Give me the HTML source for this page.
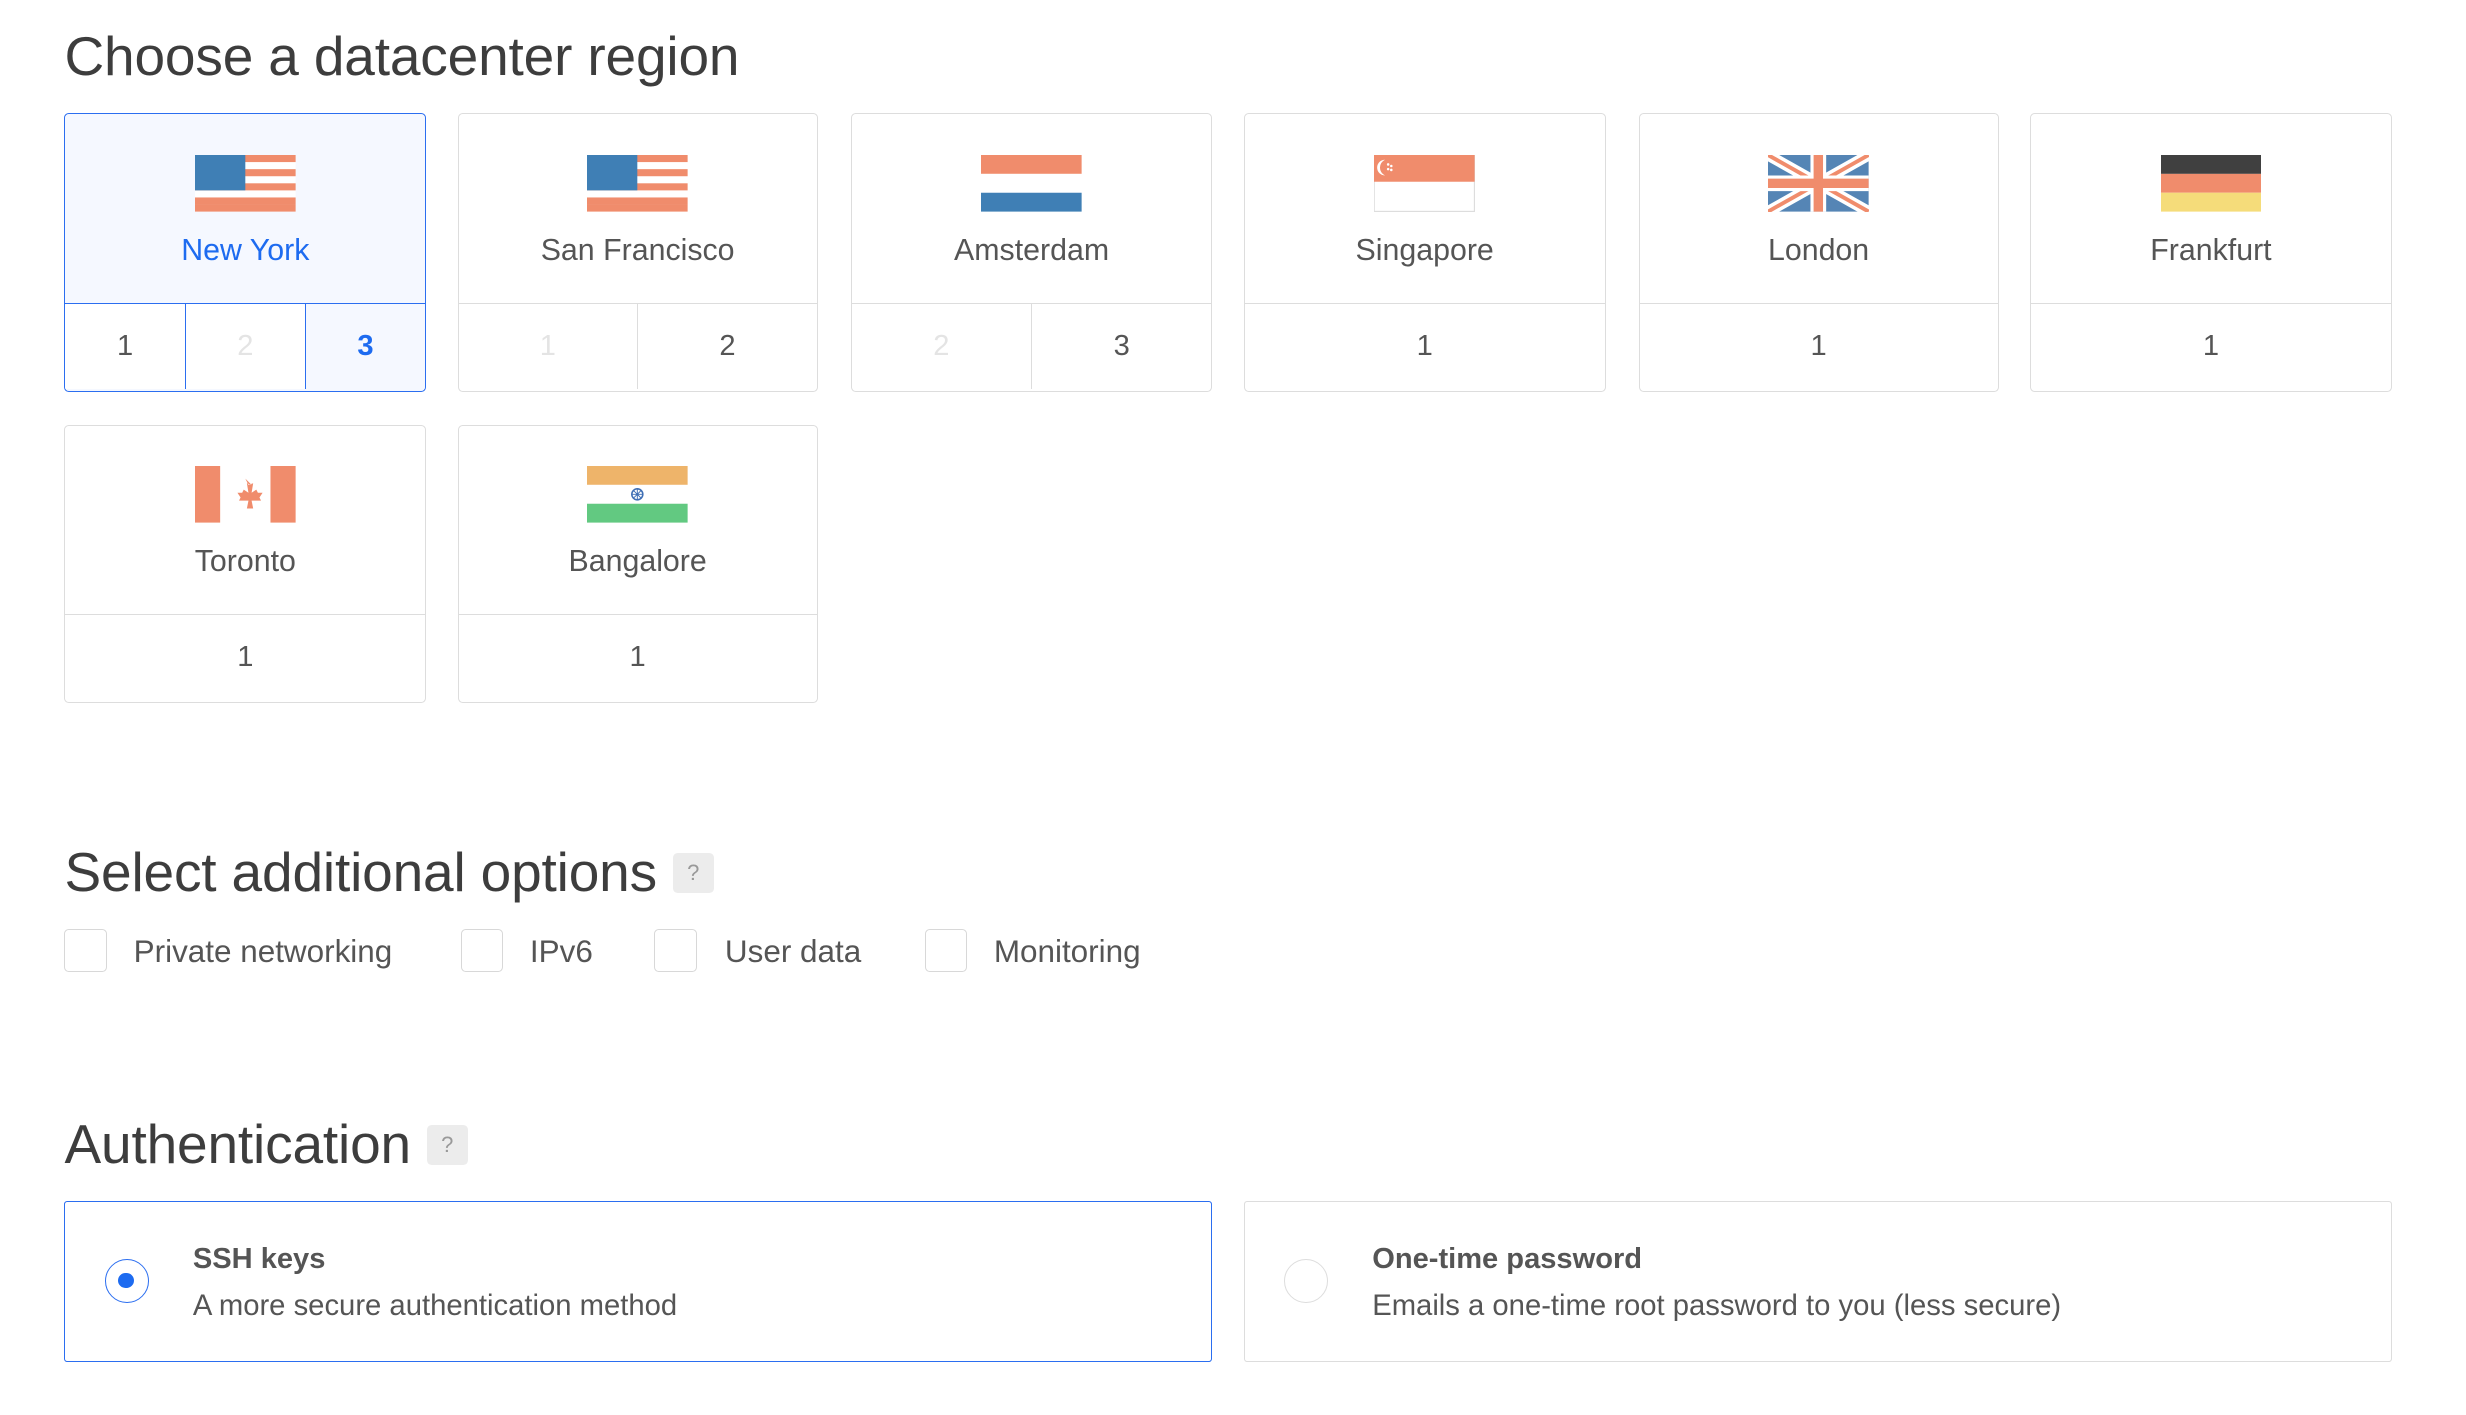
<!DOCTYPE html>
<html><head><meta charset="utf-8"><style>
html,body{margin:0;padding:0;background:#fff;}
body{width:1568px;height:900px;zoom:1.5725;position:relative;overflow:hidden;font-family:"Liberation Sans",sans-serif;color:#444;}
.h{position:absolute;left:41px;font-size:35px;color:#3d3d3d;letter-spacing:-0.1px;}
.q{display:inline-block;width:26px;height:25px;background:#ececec;border-radius:3px;color:#999;font-size:14px;text-align:center;line-height:25px;vertical-align:middle;margin-left:10px;position:relative;top:-2px;}
.card{position:absolute;width:227px;height:177px;border:1px solid #ddd;border-radius:3px;background:#fff;box-sizing:border-box;overflow:hidden;}
.card .top{height:120px;border-bottom:1px solid #ddd;position:relative;}
.card .flag{position:absolute;left:50%;top:26px;width:64px;height:36px;margin-left:-32px;}
.card .name{position:absolute;left:0;right:0;top:76px;text-align:center;font-size:19.3px;color:#555;}
.card .nums{display:flex;height:54px;}
.card .nums div{flex:1;text-align:center;line-height:54px;font-size:18.5px;color:#555;border-left:1px solid #ddd;}
.card .nums div:first-child{border-left:none;}
.card .nums div.d{color:#e4e4e4;}
.sel{border-color:#2b6ef0;background:#f5f8ff;}
.sel .top{border-bottom-color:#2b6ef0;}
.sel .name{color:#1d6bf0;}
.sel .nums div{border-left-color:#2b6ef0;background:#fff;}
.sel .nums div.b{color:#1d6bf0;font-weight:bold;background:#f5f8ff;}
.cb{position:absolute;top:591px;width:27px;height:27px;border:1px solid #d8d8d8;border-radius:3px;box-sizing:border-box;}
.cl{position:absolute;top:594px;font-size:20px;color:#555;}
.auth{position:absolute;top:764px;width:729px;height:102px;border:1px solid #ddd;border-radius:2px;box-sizing:border-box;}
.auth.on{border-color:#2b6ef0;}
.radio{position:absolute;left:25px;top:36px;width:28px;height:28px;border:1px solid #ddd;border-radius:50%;box-sizing:border-box;}
.on .radio{border-color:#2b6ef0;}
.on .radio:after{content:"";position:absolute;left:8px;top:8px;width:10px;height:10px;border-radius:50%;background:#1d6bf0;}
.t{position:absolute;left:81px;top:26px;font-weight:bold;font-size:18.5px;color:#555;}
.s{position:absolute;left:81px;top:56px;font-size:18.6px;color:#555;}
</style></head><body>
<div class="h" style="top:15px">Choose a datacenter region</div>

<div class="card sel" style="left:41px;top:72px;width:230px;"><div class="top">
<svg class="flag" viewBox="0 0 64 36"><rect width="64" height="36" fill="#fff"/><rect y="0" width="64" height="4.5" fill="#f08c6c"/><rect y="9" width="64" height="4.5" fill="#f08c6c"/><rect y="18" width="64" height="4.5" fill="#f08c6c"/><rect y="27" width="64" height="4.5" fill="#f08c6c"/><rect y="31.5" width="64" height="4.5" fill="#f08c6c"/><rect width="32" height="22.5" fill="#3f7fb5"/></svg>
<div class="name">New York</div></div>
<div class="nums"><div>1</div><div class="d">2</div><div class="b">3</div></div></div>

<div class="card" style="left:291px;top:72px;width:229px;"><div class="top">
<svg class="flag" viewBox="0 0 64 36"><rect width="64" height="36" fill="#fff"/><rect y="0" width="64" height="4.5" fill="#f08c6c"/><rect y="9" width="64" height="4.5" fill="#f08c6c"/><rect y="18" width="64" height="4.5" fill="#f08c6c"/><rect y="27" width="64" height="4.5" fill="#f08c6c"/><rect y="31.5" width="64" height="4.5" fill="#f08c6c"/><rect width="32" height="22.5" fill="#3f7fb5"/></svg>
<div class="name">San Francisco</div></div>
<div class="nums"><div class="d">1</div><div>2</div></div></div>

<div class="card" style="left:541px;top:72px;width:230px;"><div class="top">
<svg class="flag" viewBox="0 0 64 36"><rect width="64" height="12" fill="#f08c6c"/><rect y="12" width="64" height="12" fill="#fff"/><rect y="24" width="64" height="12" fill="#3f7fb5"/></svg>
<div class="name">Amsterdam</div></div>
<div class="nums"><div class="d">2</div><div>3</div></div></div>

<div class="card" style="left:791px;top:72px;width:230px;"><div class="top">
<svg class="flag" viewBox="0 0 64 36"><rect width="64" height="36" fill="#fff" stroke="#ddd"/><rect width="64" height="17" fill="#f08c6c"/><path d="M7 3a5 5 0 0 0 0 10a5.5 5.5 0 0 1 0-10z" fill="#fff"/><circle cx="9" cy="6" r=".8" fill="#fff"/><circle cx="11" cy="7" r=".8" fill="#fff"/><circle cx="9" cy="9" r=".8" fill="#fff"/><circle cx="11" cy="9.5" r=".8" fill="#fff"/></svg>
<div class="name">Singapore</div></div>
<div class="nums"><div>1</div></div></div>

<div class="card" style="left:1042px;top:72px;width:229px;"><div class="top">
<svg class="flag" viewBox="0 0 64 36"><rect width="64" height="36" fill="#5585b5"/><path d="M0 0L64 36M64 0L0 36" stroke="#fff" stroke-width="7"/><path d="M0 0L64 36M64 0L0 36" stroke="#f08c6c" stroke-width="2.5"/><path d="M32 0V36M0 18H64" stroke="#fff" stroke-width="10"/><path d="M32 0V36M0 18H64" stroke="#f08c6c" stroke-width="6"/></svg>
<div class="name">London</div></div>
<div class="nums"><div>1</div></div></div>

<div class="card" style="left:1291px;top:72px;width:230px;"><div class="top">
<svg class="flag" viewBox="0 0 64 36"><rect width="64" height="12" fill="#404040"/><rect y="12" width="64" height="12" fill="#f08c6c"/><rect y="24" width="64" height="12" fill="#f5dc7a"/></svg>
<div class="name">Frankfurt</div></div>
<div class="nums"><div>1</div></div></div>

<div class="card" style="left:41px;top:270px;width:230px;"><div class="top">
<svg class="flag" viewBox="0 0 64 36"><rect width="64" height="36" fill="#fff"/><rect width="16" height="36" fill="#f08c6c"/><rect x="48" width="16" height="36" fill="#f08c6c"/><path d="M32 8l2 4 3-1-1 6 3-2 1 2 3 0-2 3 1 2-6 0 1 5h-4l1-5-6 0 1-2-2-3 3 0 1-2 3 2-1-6 3 1z" fill="#f08c6c"/></svg>
<div class="name">Toronto</div></div>
<div class="nums"><div>1</div></div></div>

<div class="card" style="left:291px;top:270px;width:229px;"><div class="top">
<svg class="flag" viewBox="0 0 64 36"><rect width="64" height="12" fill="#eeb46a"/><rect y="12" width="64" height="12" fill="#fff"/><rect y="24" width="64" height="12" fill="#62c981"/><circle cx="32" cy="18" r="3.5" fill="none" stroke="#3f6fb5" stroke-width="1"/><path d="M28.5 18h7M32 14.5v7M29.5 15.5l5 5M34.5 15.5l-5 5" stroke="#3f6fb5" stroke-width=".6"/></svg>
<div class="name">Bangalore</div></div>
<div class="nums"><div>1</div></div></div>

<div class="h" style="top:534px">Select additional options<span class="q">?</span></div>
<div class="cb" style="left:41px"></div><div class="cl" style="left:85px">Private networking</div>
<div class="cb" style="left:293px"></div><div class="cl" style="left:337px">IPv6</div>
<div class="cb" style="left:416px"></div><div class="cl" style="left:461px">User data</div>
<div class="cb" style="left:588px"></div><div class="cl" style="left:632px">Monitoring</div>

<div class="h" style="top:707px">Authentication<span class="q">?</span></div>
<div class="auth on" style="left:41px;width:730px"><div class="radio"></div><div class="t">SSH keys</div><div class="s">A more secure authentication method</div></div>
<div class="auth" style="left:791px;width:730px"><div class="radio"></div><div class="t">One-time password</div><div class="s">Emails a one-time root password to you (less secure)</div></div>
</body></html>
